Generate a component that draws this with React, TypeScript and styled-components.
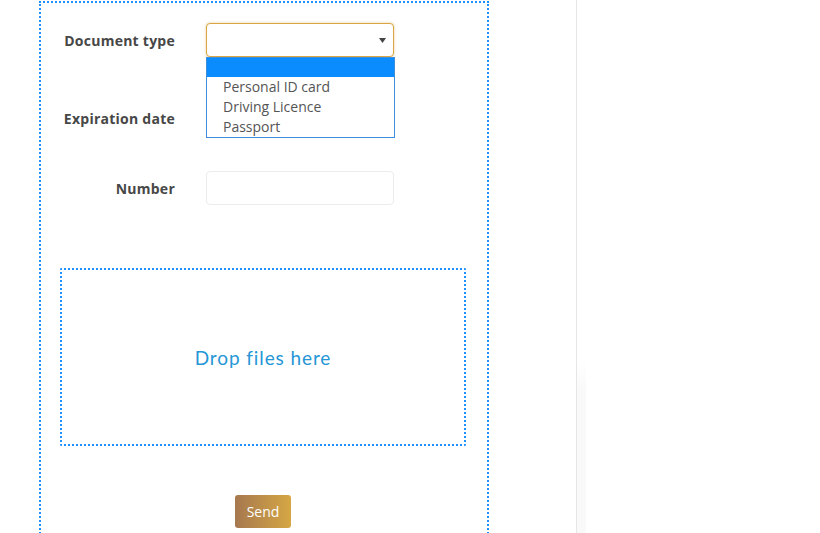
import React from "react";
import styled, { createGlobalStyle } from "styled-components";

const GlobalStyle = createGlobalStyle`
  html, body {
    margin: 0;
    padding: 0;
    background: #ffffff;
    font-family: "Open Sans", "Liberation Sans", sans-serif;
  }
`;

const Page = styled.div`
  display: flex;
  width: 820px;
  height: 533px;
  overflow: hidden;
`;

const MainColumn = styled.div`
  width: 577px;
  height: 533px;
  border-right: 1px solid #e6e6e6;
  box-sizing: border-box;
  padding-top: 1px;
  padding-left: 39px;
`;

const SideColumn = styled.div`
  flex: 1;
  position: relative;
`;

const SideShade = styled.div`
  position: absolute;
  left: 0;
  top: 360px;
  width: 9px;
  bottom: 0;
  background: linear-gradient(to bottom, rgba(0, 0, 0, 0), rgba(0, 0, 0, 0.025) 30px);
`;

const FormBox = styled.div`
  width: 450px;
  min-height: 560px;
  box-sizing: border-box;
  border: 2px dotted #1e90ff;
  padding: 20px 0 0 0;
`;

const Row = styled.div<{ $gap: number }>`
  display: flex;
  align-items: center;
  height: 34px;
  margin-bottom: ${(p) => p.$gap}px;
`;

const Label = styled.label`
  width: 165px;
  box-sizing: border-box;
  padding-right: 31px;
  text-align: right;
  font-size: 14px;
  font-weight: 700;
  letter-spacing: 0.25px;
  color: #474747;
`;

const Field = styled.div`
  position: relative;
  width: 188px;
  height: 34px;
`;

const SelectBox = styled.div`
  width: 188px;
  height: 34px;
  box-sizing: border-box;
  border: 1px solid #d9a646;
  border-radius: 4px;
  box-shadow: 0 0 3px rgba(217, 166, 70, 0.55);
  background: #fff;
  display: flex;
  align-items: center;
  justify-content: flex-end;
  padding-right: 7px;
`;

const OptionList = styled.ul`
  position: absolute;
  top: 34px;
  left: 0;
  width: 189px;
  margin: 0;
  padding: 0;
  list-style: none;
  box-sizing: border-box;
  border: 1px solid #3d8fdc;
  background: #fff;
  z-index: 2;
`;

const Option = styled.li<{ $active?: boolean }>`
  height: ${(p) => (p.$active ? 19 : 20)}px;
  line-height: 20px;
  padding-left: 16px;
  font-size: 14px;
  color: #555;
  background: ${(p) => (p.$active ? "#0a8cff" : "transparent")};
`;

const TextInput = styled.div`
  width: 188px;
  height: 34px;
  box-sizing: border-box;
  border: 1px solid #ececec;
  border-radius: 4px;
  background: #fff;
`;

const DropZone = styled.div`
  margin: 63px 0 0 19px;
  width: 406px;
  height: 178px;
  box-sizing: border-box;
  border: 2px dotted #1e90ff;
  border-radius: 2px;
  display: flex;
  align-items: center;
  justify-content: center;
  font-family: "Lato", "Open Sans", sans-serif;
  font-size: 19px;
  letter-spacing: 0.9px;
  color: #2596d6;
`;

const ButtonRow = styled.div`
  display: flex;
  justify-content: center;
  padding: 49px 0 0 0;
  margin-left: -2px;
`;

const SendButton = styled.button`
  width: 56px;
  height: 33px;
  border: none;
  border-radius: 3px;
  background: linear-gradient(to right, #a6784f, #d5a744);
  color: #fff;
  font-family: "Open Sans", sans-serif;
  font-size: 14px;
  padding: 0;
`;

function Arrow() {
  return (
    <svg width="7" height="5" viewBox="0 0 7 5">
      <polygon points="0,0 7,0 3.5,5" fill="#444" />
    </svg>
  );
}

export default function App() {
  return (
    <>
      <GlobalStyle />
      <Page>
        <MainColumn>
          <FormBox>
            <Row $gap={44}>
              <Label>Document type</Label>
              <Field>
                <SelectBox>
                  <Arrow />
                </SelectBox>
                <OptionList>
                  <Option $active />
                  <Option>Personal ID card</Option>
                  <Option>Driving Licence</Option>
                  <Option>Passport</Option>
                </OptionList>
              </Field>
            </Row>
            <Row $gap={36}>
              <Label>Expiration date</Label>
              <Field>
                <TextInput />
              </Field>
            </Row>
            <Row $gap={0}>
              <Label>Number</Label>
              <Field>
                <TextInput />
              </Field>
            </Row>
            <DropZone>Drop files here</DropZone>
            <ButtonRow>
              <SendButton>Send</SendButton>
            </ButtonRow>
          </FormBox>
        </MainColumn>
        <SideColumn>
          <SideShade />
        </SideColumn>
      </Page>
    </>
  );
}
